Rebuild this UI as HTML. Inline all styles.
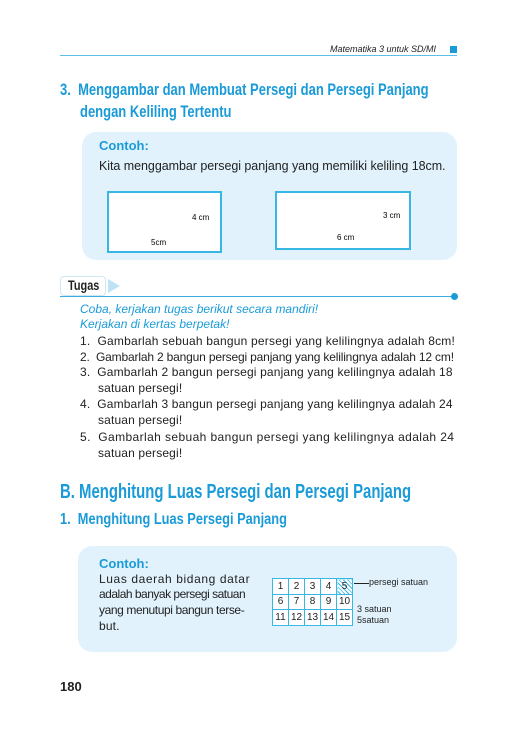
<!DOCTYPE html>
<html><head><meta charset="utf-8"><style>
body{margin:0;width:516px;height:729px;background:#fff;position:relative;font-family:"Liberation Sans",sans-serif;overflow:hidden}
.a{position:absolute;white-space:nowrap}
.h{color:#1a9bd8;font-weight:bold;transform-origin:0 0}
.t{font-size:12px;color:#222;letter-spacing:0.15px}
.blue{color:#1a9bd8}
.box{position:absolute;background:#e1f2fc;border-radius:14px}
.rect{position:absolute;border:2px solid #38b6e4;background:#fff}
table{border-collapse:collapse;position:absolute;left:272px;top:578px}
td{border:1.5px solid #38b6e4;width:15px;height:14.5px;font-size:10px;text-align:center;padding:0;background:#fff;color:#222}
</style></head><body>
<div class="a" style="left:330px;top:44px;font-size:9px;font-style:italic;color:#222">Matematika 3 untuk SD/MI</div>
<div class="a" style="left:450px;top:46px;width:7px;height:7px;background:#1a9bd8"></div>
<div class="a" style="left:60px;top:55px;width:397px;height:1px;background:#5bbfe6"></div>

<div class="a h" style="left:60px;top:80px;font-size:17px;transform:scaleX(0.765)">3.&nbsp;&nbsp;Menggambar dan Membuat Persegi dan Persegi Panjang</div>
<div class="a h" style="left:80px;top:102px;font-size:17px;transform:scaleX(0.765)">dengan Keliling Tertentu</div>

<div class="box" style="left:82px;top:132px;width:375px;height:128px"></div>
<div class="a blue" style="left:99px;top:138px;font-size:13px;font-weight:bold">Contoh:</div>
<div class="a t" style="left:99px;top:159px;font-size:12.5px;letter-spacing:-0.05px">Kita menggambar persegi panjang yang memiliki keliling 18cm.</div>
<div class="rect" style="left:107px;top:191px;width:111px;height:58px"></div>
<div class="a" style="left:192px;top:213px;font-size:8px">4 cm</div>
<div class="a" style="left:151px;top:238px;font-size:8px">5cm</div>
<div class="rect" style="left:275px;top:191px;width:132px;height:55px"></div>
<div class="a" style="left:383px;top:211px;font-size:8px">3 cm</div>
<div class="a" style="left:337px;top:233px;font-size:8px">6 cm</div>

<div class="a" style="left:60px;top:276px;width:44px;height:18px;border:1px solid #cfe6f3;border-radius:4px;background:#fff"></div>
<div class="a" style="left:68px;top:277px;font-size:14px;font-weight:bold;color:#222;transform:scaleX(0.78);transform-origin:0 0">Tugas</div>
<div class="a" style="left:108px;top:279px;width:0;height:0;border-top:7px solid transparent;border-bottom:7px solid transparent;border-left:12px solid #bfe3f6"></div>
<div class="a" style="left:60px;top:296px;width:395px;height:1px;background:#3aaee0"></div>
<div class="a" style="left:451px;top:293px;width:7px;height:7px;border-radius:50%;background:#1a9bd8"></div>
<div class="a blue" style="left:80px;top:302px;font-size:12px;font-style:italic">Coba, kerjakan tugas berikut secara mandiri!</div>
<div class="a blue" style="left:80px;top:317px;font-size:12px;font-style:italic">Kerjakan di kertas berpetak!</div>

<div class="a t" style="left:80px;top:334px;letter-spacing:0.2px">1.&nbsp;&nbsp;Gambarlah sebuah bangun persegi yang kelilingnya adalah 8cm!</div>
<div class="a t" style="left:80px;top:350px;letter-spacing:-0.17px">2.&nbsp;&nbsp;Gambarlah 2 bangun persegi panjang yang kelilingnya adalah 12 cm!</div>
<div class="a t" style="left:80px;top:365px">3.&nbsp;&nbsp;Gambarlah 2 bangun persegi panjang yang kelilingnya adalah 18</div>
<div class="a t" style="left:98px;top:381px">satuan persegi!</div>
<div class="a t" style="left:80px;top:397px">4.&nbsp;&nbsp;Gambarlah 3 bangun persegi panjang yang kelilingnya adalah 24</div>
<div class="a t" style="left:98px;top:413px">satuan persegi!</div>
<div class="a t" style="left:80px;top:430px;letter-spacing:0.4px">5.&nbsp;&nbsp;Gambarlah sebuah bangun persegi yang kelilingnya adalah 24</div>
<div class="a t" style="left:98px;top:446px">satuan persegi!</div>

<div class="a h" style="left:60px;top:481px;font-size:20px;transform:scaleX(0.745)">B. Menghitung Luas Persegi dan Persegi Panjang</div>
<div class="a h" style="left:60px;top:511px;font-size:16px;transform:scaleX(0.8)">1.&nbsp;&nbsp;Menghitung Luas Persegi Panjang</div>

<div class="box" style="left:78px;top:546px;width:379px;height:106px"></div>
<div class="a blue" style="left:99px;top:556px;font-size:13px;font-weight:bold">Contoh:</div>
<div class="a t" style="left:99px;top:572px;font-size:12px;letter-spacing:0.6px">Luas daerah bidang datar</div>
<div class="a t" style="left:99px;top:587px;font-size:12px;letter-spacing:-0.5px">adalah banyak persegi satuan</div>
<div class="a t" style="left:99px;top:603px;font-size:12px;letter-spacing:-0.4px">yang menutupi bangun terse-</div>
<div class="a t" style="left:99px;top:619px;font-size:12px">but.</div>
<table>
<tr><td>1</td><td>2</td><td>3</td><td>4</td><td style="background:repeating-linear-gradient(45deg,#fff 0 2px,#38b6e4 2px 3px)">5</td></tr>
<tr><td>6</td><td>7</td><td>8</td><td>9</td><td>10</td></tr>
<tr><td>11</td><td>12</td><td>13</td><td>14</td><td>15</td></tr>
</table>
<div class="a" style="left:354px;top:583px;width:15px;height:1px;background:#222"></div>
<div class="a" style="left:369px;top:577px;font-size:9px;color:#222">persegi satuan</div>
<div class="a" style="left:357px;top:604px;font-size:9px;color:#222">3 satuan</div>
<div class="a" style="left:357px;top:615px;font-size:9px;color:#222">5satuan</div>

<div class="a" style="left:60px;top:679px;font-size:13px;font-weight:bold;color:#222">180</div>
</body></html>
